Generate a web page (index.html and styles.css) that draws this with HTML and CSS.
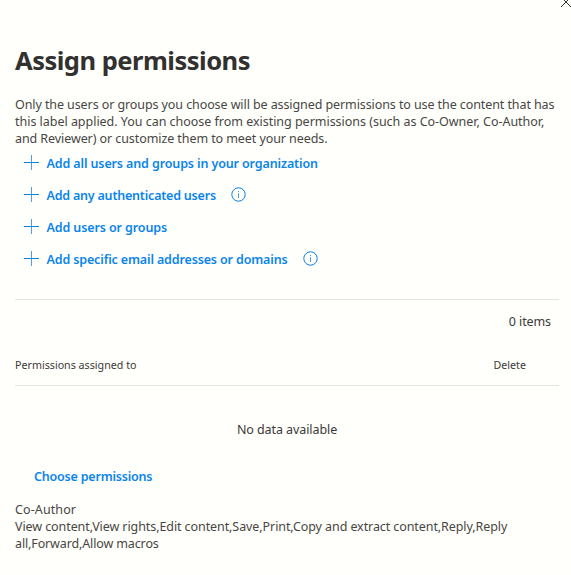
FILE: index.html
```html
<!DOCTYPE html>
<html>
<head lang="en">
    <meta charset="UTF-8">
    <title>Assign permissions</title>
    <link rel="stylesheet" href="styles.css">
</head>
<body>
    <div class="panel">
        <svg class="close" viewBox="0 0 12 12"><path d="M1 1L11 11M11 1L1 11"/></svg>
        <h1 class="title"><span>Assign permissions</span></h1>
        <p class="intro">
            <span class="l1">Only the users or groups you choose will be assigned permissions to use the content that has</span><br>
            <span class="l2">this label applied. You can choose from existing permissions (such as Co-Owner, Co-Author,</span><br>
            <span class="l3">and Reviewer) or customize them to meet your needs.</span>
        </p>
        <ul class="actions">
            <li>
                <svg class="plus" viewBox="0 0 15 15"><path d="M0 7.5H15"/><path class="thin" d="M7.5 0V15"/></svg>
                <a class="a1">Add all users and groups in your organization</a>
            </li>
            <li>
                <svg class="plus" viewBox="0 0 15 15"><path d="M0 7.5H15"/><path class="thin" d="M7.5 0V15"/></svg>
                <a class="a2">Add any authenticated users</a>
                <svg class="info" viewBox="0 0 15 15"><circle cx="7.5" cy="7.5" r="6.7"/><path class="thin" d="M7.5 6.3V11M7.5 4V5.2"/></svg>
            </li>
            <li>
                <svg class="plus" viewBox="0 0 15 15"><path d="M0 7.5H15"/><path class="thin" d="M7.5 0V15"/></svg>
                <a class="a3">Add users or groups</a>
            </li>
            <li>
                <svg class="plus" viewBox="0 0 15 15"><path d="M0 7.5H15"/><path class="thin" d="M7.5 0V15"/></svg>
                <a class="a4">Add specific email addresses or domains</a>
                <svg class="info" viewBox="0 0 15 15"><circle cx="7.5" cy="7.5" r="6.7"/><path class="thin" d="M7.5 6.3V11M7.5 4V5.2"/></svg>
            </li>
        </ul>
        <div class="count"><span>0 items</span></div>
        <div class="list-head">
            <span class="col-name">Permissions assigned to</span>
            <span class="col-delete">Delete</span>
        </div>
        <div class="empty"><span>No data available</span></div>
        <a class="choose">Choose permissions</a>
        <div class="summary">
            <span class="s1">Co-Author</span><br>
            <span class="s2">View content,View rights,Edit content,Save,Print,Copy and extract content,Reply,Reply</span><br>
            <span class="s3">all,Forward,Allow macros</span>
        </div>
    </div>
</body>
</html>
```
FILE: styles.css
```css
*{
    margin: 0;
    padding: 0;
    box-sizing: border-box;
}
body{
    background: #fffffb;
    color: #3b3a39;
    font-family: "Noto Sans", "Open Sans", sans-serif;
    font-size: 12.5px;
    line-height: 17px;
    overflow: hidden;
}
.panel{
    position: relative;
    width: 571px;
    height: 575px;
    padding: 42px 12px 0 15px;
    white-space: nowrap;
}
.close{
    position: absolute;
    left: 560px;
    top: -4px;
    width: 12px;
    height: 12px;
    fill: none;
    stroke: #323130;
}
.title{
    height: 36px;
    color: #323130;
    font-size: 25.5px;
    line-height: 36px;
    font-weight: 700;
    letter-spacing: -0.5px;
}
.intro{
    margin-top: 18px;
    height: 51px;
    color: #484644;
}
.l1{
    letter-spacing: -0.09px;
}
.l2{
    letter-spacing: -0.025px;
}
.l3{
    letter-spacing: -0.08px;
}
.actions{
    list-style: none;
    height: 128px;
}
.actions li{
    display: flex;
    align-items: flex-start;
    height: 32px;
    padding: 8px 0 0 9px;
}
.actions a,.choose{
    color: #0a84ee;
    font-weight: 600;
}
.a1{
    letter-spacing: -0.12px;
}
.a2{
    letter-spacing: -0.21px;
}
.a3{
    letter-spacing: -0.11px;
}
.a4{
    letter-spacing: -0.14px;
}
.plus,.info{
    width: 15px;
    height: 15px;
    fill: none;
    stroke: #0f7fdc;
}
.plus{
    margin-right: 7.5px;
}
.info{
    margin-left: 15px;
}
.thin{
    stroke-opacity: 0.75;
}
.count{
    height: 45px;
    margin-top: 24px;
    padding: 13px 8px 0 0;
    border-top: 1px solid #e4e5e1;
    text-align: right;
    letter-spacing: -0.1px;
}
.list-head{
    display: flex;
    justify-content: space-between;
    height: 42px;
    padding: 13px 33px 0 0;
    border-bottom: 1px solid #e4e5e1;
    font-size: 10.7px;
}
.empty{
    height: 82px;
    padding-top: 35px;
    text-align: center;
    letter-spacing: -0.08px;
}
.choose{
    display: block;
    height: 17px;
    padding-left: 19px;
    letter-spacing: -0.2px;
}
.summary{
    margin-top: 16px;
    color: #484644;
}
.s1{
    letter-spacing: 0.1px;
}
.s2{
    letter-spacing: -0.085px;
}
.s3{
    letter-spacing: -0.13px;
}
```
